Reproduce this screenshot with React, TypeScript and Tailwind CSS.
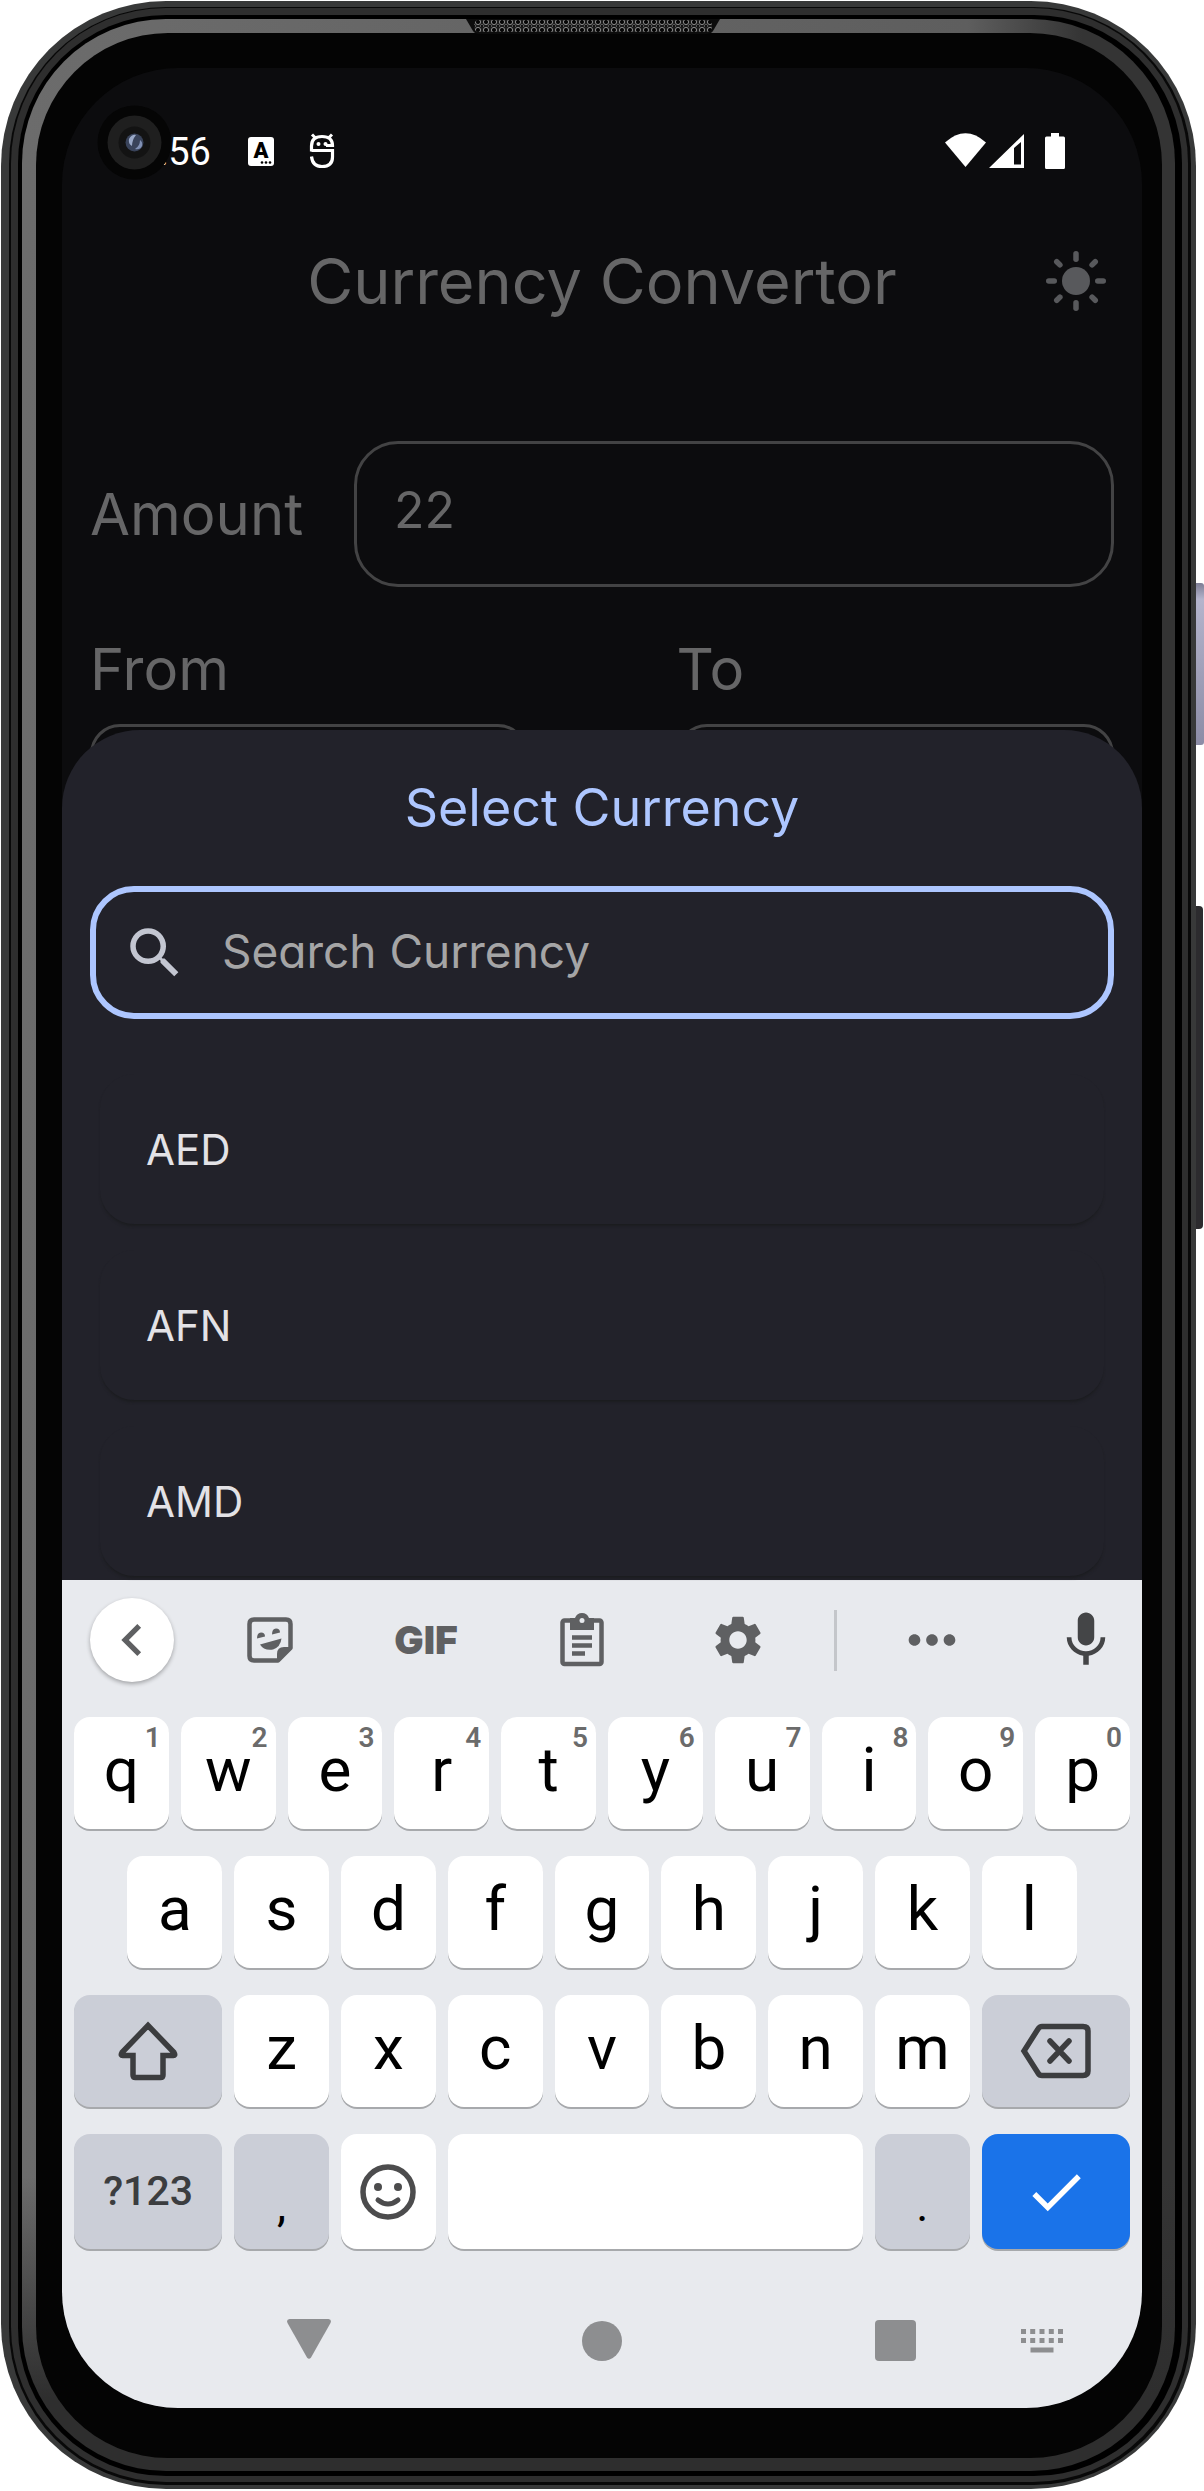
import { useState, type ReactNode } from "react";
import { MdCheck, MdChevronLeft, MdMic, MdMoreHoriz, MdSearch, MdSettings } from "react-icons/md";

const CURRENCIES = ["AED", "AFN", "AMD"];
const TOP_ROW = ["q", "w", "e", "r", "t", "y", "u", "i", "o", "p"];
const HOME_ROW = ["a", "s", "d", "f", "g", "h", "j", "k", "l"];
const BOTTOM_ROW = ["z", "x", "c", "v", "b", "n", "m"];

function Earpiece() {
  return (
    <svg className="absolute left-[49.5%] top-[18px] h-[15px] w-[254px] -translate-x-1/2" viewBox="0 0 254 15" aria-hidden="true">
      <defs>
        <pattern id="mesh" width="8" height="8" patternUnits="userSpaceOnUse">
          <rect width="8" height="8" fill="#1c1c1c" />
          <circle cx="4" cy="3" r="2.6" fill="#050505" stroke="#8a8a8a" strokeWidth="1" />
          <circle cx="0" cy="7" r="1.6" fill="#050505" stroke="#5a5a5a" strokeWidth="1" />
          <circle cx="8" cy="7" r="1.6" fill="#050505" stroke="#5a5a5a" strokeWidth="1" />
        </pattern>
      </defs>
      <path d="M0 0H254L247 12Q245 15 241 15H13Q9 15 7 12Z" fill="#0c0c0c" />
      <rect x="8" y="1" width="238" height="12" rx="5" fill="url(#mesh)" />
    </svg>
  );
}

function Camera() {
  return (
    <svg className="absolute left-[35px] top-[37px] size-[75px]" viewBox="0 0 75 75" aria-hidden="true">
      <circle cx="37.5" cy="37.5" r="37" fill="#050505" />
      <circle cx="37.5" cy="37.5" r="27" fill="#1f1f1f" />
      <circle cx="37.5" cy="37.5" r="16" fill="#131313" />
      <circle cx="37.5" cy="37.5" r="9" fill="#39435a" />
      <path d="M32 34q3-5 7-4q-4 5-4 11q-4-2-3-7z" fill="#9aa9c8" />
      <path d="M38 44q5-3 5-9q3 2 2 6q-2 4-7 3z" fill="#8090b4" />
    </svg>
  );
}

function StatusBar() {
  return (
    <div className="relative flex h-[118px] items-center pt-12 text-white">
      <time className="ml-[97px] pt-[2px] text-[38px] leading-none">:56</time>
      <span className="relative ml-[37px] flex h-[29px] w-[26px] justify-center rounded-[3px] bg-white font-['Roboto'] text-[22px] leading-[27px] font-black text-black">
        A
        <svg className="absolute right-[2px] bottom-[2px] h-[3px] w-[12px]" viewBox="0 0 12 3" aria-hidden="true">
          <circle cx="2" cy="1.5" r="1.3" />
          <circle cx="6" cy="1.5" r="1.3" />
          <circle cx="10" cy="1.5" r="1.3" />
        </svg>
      </span>
      <svg className="ml-[35px] h-[36px] w-[26px]" viewBox="0 0 26 36" fill="none" stroke="white" strokeWidth="3.2" aria-hidden="true">
        <path d="M2.500 18.500V13Q2.500 3.500 13 3.500T23.500 12.500H17" />
        <path d="M2.500 17.500H23.500V24Q23.500 33.500 13 33.500Q3.500 33.500 2.500 23.500" />
        <path d="M3 1.500l4 4M23 1.500l-4 4" strokeWidth="3" />
        <circle cx="9.500" cy="11" r="2" fill="white" stroke="none" />
        <circle cx="16.500" cy="11" r="2" fill="white" stroke="none" />
      </svg>
      <div className="mr-[77px] ml-auto flex items-center">
        <svg className="h-[36px] w-[120px]" viewBox="0 0 120 36" fill="white" aria-hidden="true">
          <path d="M0 9.500Q20.500-9 41 9.500L20.500 34Z" />
          <path fillRule="evenodd" d="M44 35L79 1V35ZM69 15V31.500H76V9Z" />
          <path d="M106 0h8v3.500h4.500q1.500 0 1.500 1.500v29.500q0 1.500-1.500 1.500h-17q-1.500 0-1.500-1.500v-29.500q0-1.500 1.500-1.500h4.500z" />
        </svg>
      </div>
      <Camera />
    </div>
  );
}

function Sun() {
  return (
    <svg className="size-[62px]" viewBox="-31 -31 62 62" fill="#58595c" aria-hidden="true">
      <circle r="14" />
      {[0, 45, 90, 135, 180, 225, 270, 315].map((angle) => (
        <rect key={angle} x="-2.750" y="-30" width="5.500" height={angle % 90 ? 10 : 11} rx="2.750" transform={`rotate(${angle})`} />
      ))}
    </svg>
  );
}

function ConverterForm() {
  return (
    <form className="mt-[112px] px-7 text-[58px] text-[#666667]" onSubmit={(e) => e.preventDefault()}>
      <div className="flex items-center">
        <label htmlFor="amount" className="w-[264px] shrink-0 leading-[80px]">
          Amount
        </label>
        <input
          id="amount"
          defaultValue="22"
          className="h-[146px] min-w-0 flex-1 rounded-[44px] border-3 border-[#434344] bg-transparent px-[37px] pb-2 text-[50px] outline-none"
        />
      </div>
      <div className="mt-[42px] grid grid-cols-2 gap-[149px]">
        {["From", "To"].map((name) => (
          <div key={name} className="flex flex-col gap-[15px]">
            <label htmlFor={name} className="leading-[80px]">
              {name}
            </label>
            <select id={name} className="h-[146px] w-full appearance-none rounded-[30px] border-3 border-[#434344] bg-transparent" />
          </div>
        ))}
      </div>
    </form>
  );
}

function CurrencySheet() {
  const [query, setQuery] = useState("");
  return (
    <section className="relative -mt-[140px] rounded-t-[78px] bg-[#22222a] px-7 pt-[42px] pb-1">
      <h2 className="text-center text-[52px] leading-[72px] text-[#adc6ff]">Select Currency</h2>
      <label className="mt-[42px] flex h-[133px] items-center rounded-[44px] border-6 border-[#adc6ff] pl-[26px]">
        <MdSearch className="size-[66px] text-[#c3c6d1]" aria-hidden="true" />
        <input
          aria-label="Search Currency"
          placeholder="Search Currency"
          value={query}
          onChange={(e) => setQuery(e.target.value)}
          className="ml-[34px] min-w-0 flex-1 bg-transparent pb-[2px] text-[46px] outline-none placeholder:text-[#a5a5a6]"
        />
      </label>
      <ul className="mt-[55px] flex flex-col gap-[26px] px-[10px]">
        {CURRENCIES.filter((code) => code.includes(query.toUpperCase())).map((code) => (
          <li key={code}>
            <button
              type="button"
              className="h-[150px] w-full rounded-[34px] bg-[#22222a] px-[46px] text-left text-[42px] text-[#e3e2e6] shadow-[0_3px_3px_-1px_#1b1c1f]"
            >
              {code}
            </button>
          </li>
        ))}
      </ul>
    </section>
  );
}

function StickerIcon() {
  return (
    <svg className="h-[48px] w-[48px]" viewBox="0 0 48 48" fill="none" stroke="#5f6062" strokeWidth="4.500" aria-hidden="true">
      <path d="M8 3.500H40Q44.500 3.500 44.500 8V32L32 44.500H8Q3.500 44.500 3.500 40V8Q3.500 3.500 8 3.500Z" strokeLinejoin="round" />
      <path d="M31 45V38Q31 31 38 31H45Z" fill="#5f6062" stroke="none" />
      <path d="M11 22.500Q11 16.500 15 16.500T19 20.500ZM26 18.500Q26 12.500 30 12.500T34 16.500Z" fill="#5f6062" stroke="none" />
      <path d="M14 28.500L35.500 22.500Q34.500 31 27 33.500Q18 35 14 28.500Z" fill="#5f6062" stroke="none" />
    </svg>
  );
}

function ClipboardIcon() {
  return (
    <svg className="h-[54px] w-[46px]" viewBox="0 0 46 54" fill="none" stroke="#5f6062" strokeWidth="4.500" aria-hidden="true">
      <rect x="3.500" y="7.500" width="39" height="43.500" rx="2" />
      <path d="M11 5H16Q18 0 23 0T30 5H35V17H11Z" fill="#5f6062" stroke="none" />
      <circle cx="23" cy="7.500" r="2.500" fill="#e8eaee" stroke="none" />
      <path d="M13 24.500H33M13 32.500H33M13 40.500H26" />
    </svg>
  );
}

function Toolbar() {
  return (
    <div className="mb-[17px] flex h-[120px] items-center pr-[37px] pl-7 text-[#5f6062]">
      <button
        type="button"
        aria-label="Back"
        className="flex size-[84px] items-center justify-center rounded-full bg-white shadow-[0_2px_4px_rgba(0,0,0,0.3)]"
      >
        <MdChevronLeft className="size-[64px]" />
      </button>
      <div className="mr-[18px] ml-[18px] grid flex-1 grid-cols-4">
        <button type="button" aria-label="Stickers" className="flex items-center justify-center">
          <StickerIcon />
        </button>
        <button type="button" className="pb-[2px] font-['Inter'] text-[39px] leading-none font-black">
          GIF
        </button>
        <button type="button" aria-label="Clipboard" className="flex items-center justify-center">
          <ClipboardIcon />
        </button>
        <button type="button" aria-label="Settings" className="flex items-center justify-center">
          <MdSettings className="size-[58px]" />
        </button>
      </div>
      <span className="h-[61px] w-[3px] bg-[#c4c6ca]" />
      <button type="button" aria-label="More" className="flex w-[190px] items-center justify-center">
        <MdMoreHoriz className="size-[70px]" />
      </button>
      <button type="button" aria-label="Voice input" className="ml-10 flex w-[38px] justify-center text-[#444547]">
        <MdMic className="size-[66px] shrink-0" />
      </button>
    </div>
  );
}

const KEY = "relative flex h-[112px] items-center justify-center rounded-2xl shadow-[0_2px_0_#a7a9ac]";

function Letter({ char, hint, first }: { char: string; hint?: number; first?: boolean }) {
  return (
    <button type="button" className={`${KEY} col-span-2 bg-white pb-2 text-[62px] text-black ${first ? "col-start-2" : ""}`}>
      {char}
      {hint !== undefined && <span className="absolute top-[7px] right-[8px] text-[28px] leading-[28px] font-semibold text-[#6b6b6b]">{hint}</span>}
    </button>
  );
}

function SpecialKey({ label, className, children }: { label: string; className: string; children?: ReactNode }) {
  return (
    <button type="button" aria-label={label} className={`${KEY} ${className}`}>
      {children}
    </button>
  );
}

function Keyboard() {
  return (
    <section className="bg-[#e8eaee] font-['Roboto'] text-[#3c3d3f]">
      <Toolbar />
      <div className="flex flex-col gap-[27px] px-3">
        <div className="grid grid-cols-20 gap-x-3">
          {TOP_ROW.map((char, i) => (
            <Letter key={char} char={char} hint={(i + 1) % 10} />
          ))}
        </div>
        <div className="grid grid-cols-20 gap-x-3">
          {HOME_ROW.map((char, i) => (
            <Letter key={char} char={char} first={i === 0} />
          ))}
        </div>
        <div className="grid grid-cols-20 gap-x-3">
          <SpecialKey label="Shift" className="col-span-3 bg-[#cbced7]">
            <svg className="h-[60px] w-[62px]" viewBox="0 0 62 60" fill="none" stroke="currentColor" strokeWidth="5.500" aria-hidden="true">
              <path d="M31 4.500L57 31.500Q59 35 55.500 34.500H46V54Q46 56.500 43.500 56.500H18.500Q16 56.500 16 54V34.500H6.500Q3 35 5 31.500Z" />
            </svg>
          </SpecialKey>
          {BOTTOM_ROW.map((char) => (
            <Letter key={char} char={char} />
          ))}
          <SpecialKey label="Backspace" className="col-span-3 bg-[#cbced7]">
            <svg className="h-[56px] w-[72px]" viewBox="0 0 72 56" fill="none" stroke="currentColor" strokeWidth="5.500" aria-hidden="true">
              <path d="M22 3.500H63Q68 3.500 68 8V48Q68 52.500 63 52.500H22Q19.500 52.500 18 50L4 28L18 6Q19.500 3.500 22 3.500Z" />
              <path d="M30 18L49 38M49 18L30 38" strokeLinecap="round" />
            </svg>
          </SpecialKey>
        </div>
        <div className="grid grid-cols-20 gap-x-3">
          <button type="button" className={`${KEY} col-span-3 h-[115px] bg-[#cbced7] text-[41px] font-medium`}>
            ?123
          </button>
          <button type="button" className={`${KEY} col-span-2 h-[115px] bg-[#cbced7] pt-7 text-[46px] text-black`}>
            ,
          </button>
          <SpecialKey label="Emoji" className="col-span-2 h-[115px] bg-white">
            <svg className="size-[56px]" viewBox="0 0 56 56" fill="none" stroke="#4c4c4d" strokeWidth="5.500" aria-hidden="true">
              <circle cx="28" cy="28" r="25" />
              <circle cx="18" cy="23" r="4" fill="#4c4c4d" stroke="none" />
              <circle cx="38" cy="23" r="4" fill="#4c4c4d" stroke="none" />
              <path d="M18 36Q28 44 38 36" strokeWidth="5" strokeLinecap="round" />
            </svg>
          </SpecialKey>
          <SpecialKey label="Space" className="col-span-8 h-[115px] bg-white" />
          <button type="button" className={`${KEY} col-span-2 h-[115px] bg-[#cbced7] pt-7 text-[46px] text-black`}>
            .
          </button>
          <SpecialKey label="Done" className="col-span-3 h-[115px] bg-[#1a73e9] text-white">
            <MdCheck className="size-[66px]" />
          </SpecialKey>
        </div>
      </div>
      <SystemNav />
    </section>
  );
}

function SystemNav() {
  return (
    <nav className="flex h-[159px] items-center px-[100px] pt-6 text-[#8d8e90]">
      <div className="grid flex-1 grid-cols-3 items-center justify-items-center">
        <button type="button" aria-label="Hide keyboard" className="pb-1">
          <svg className="block h-[40px] w-[44px]" viewBox="0 0 44 40" fill="currentColor" aria-hidden="true">
            <path d="M2.500 0H41.500Q45 .5 43.500 4L24 38.500Q22 41 20 38.500L.5 4Q-1 .5 2.500 0Z" />
          </svg>
        </button>
        <button type="button" aria-label="Home" className="size-10 rounded-full bg-[#8d8e90]" />
        <button type="button" aria-label="Recent apps" className="size-[41px] rounded-[4px] bg-[#8d8e90]" />
      </div>
      <button type="button" aria-label="Switch keyboard" className="-mr-[21px] -ml-[21px]">
        <svg className="h-[24px] w-[42px]" viewBox="0 0 42 24" fill="currentColor" aria-hidden="true">
          {[0, 9.2, 18.5, 27.8, 37].map((x) => (
            <g key={x}>
              <rect x={x} width="5" height="5" />
              <rect x={x} y="9" width="5" height="5" />
            </g>
          ))}
          <rect x="9.500" y="18.500" width="23" height="5" />
        </svg>
      </button>
    </nav>
  );
}

function PhoneCase({ children }: { children: ReactNode }) {
  return (
    <div className="relative bg-white pt-px pr-2 pb-[2px] pl-px">
      <span className="absolute top-[583px] right-0 h-[162px] w-[14px] rounded-[3px] bg-linear-to-b from-[#7d7d94] via-[#b4b4cc] via-10% to-[#8c8ca6]" />
      <span className="absolute top-[906px] right-[1px] h-[323px] w-[14px] rounded-[4px] bg-[#2c2b2e]" />
      <div className="relative rounded-[165px] bg-[#383939] pt-[6px] pr-[5px] pb-[4px] pl-[8px]">
        <div className="rounded-[157px] bg-[#080808] pt-px pr-[3px] pb-[3px] pl-[2px]">
          <div className="rounded-[155px] bg-[#2e2e2e] pt-[7px] pr-[6px] pb-[6px] pl-[7px]">
            <div className="rounded-[148px] bg-black pt-[4px] pr-[7px] pb-[5px] pl-[4px]">
              <div className="rounded-[144px] bg-[linear-gradient(to_bottom,transparent_88%,#2e2e2e_97%),linear-gradient(to_right,#6c6c6c_0%,#5e5e5e_82%,#343434_92%)] pt-[14px] pr-[13px] pb-[13px] pl-[14px]">
                <div className="rounded-[132px] bg-[#040404] pt-[35px] pr-[20px] pb-[50px] pl-[26px]">{children}</div>
              </div>
            </div>
          </div>
        </div>
        <Earpiece />
      </div>
    </div>
  );
}

export default function App() {
  return (
    <PhoneCase>
      <main className="overflow-hidden rounded-[116px] bg-[#0c0c0e] font-['Roboto']">
        <StatusBar />
        <div className="font-['Inter',sans-serif] [font-feature-settings:'cv11']">
          <header className="relative mt-[47px] flex h-24 items-center justify-center">
            <h1 className="text-[63px] leading-none text-[#666667]">Currency Convertor</h1>
            <button type="button" aria-label="Toggle theme" className="absolute right-[35px]">
              <Sun />
            </button>
          </header>
          <ConverterForm />
          <CurrencySheet />
        </div>
        <Keyboard />
      </main>
    </PhoneCase>
  );
}
